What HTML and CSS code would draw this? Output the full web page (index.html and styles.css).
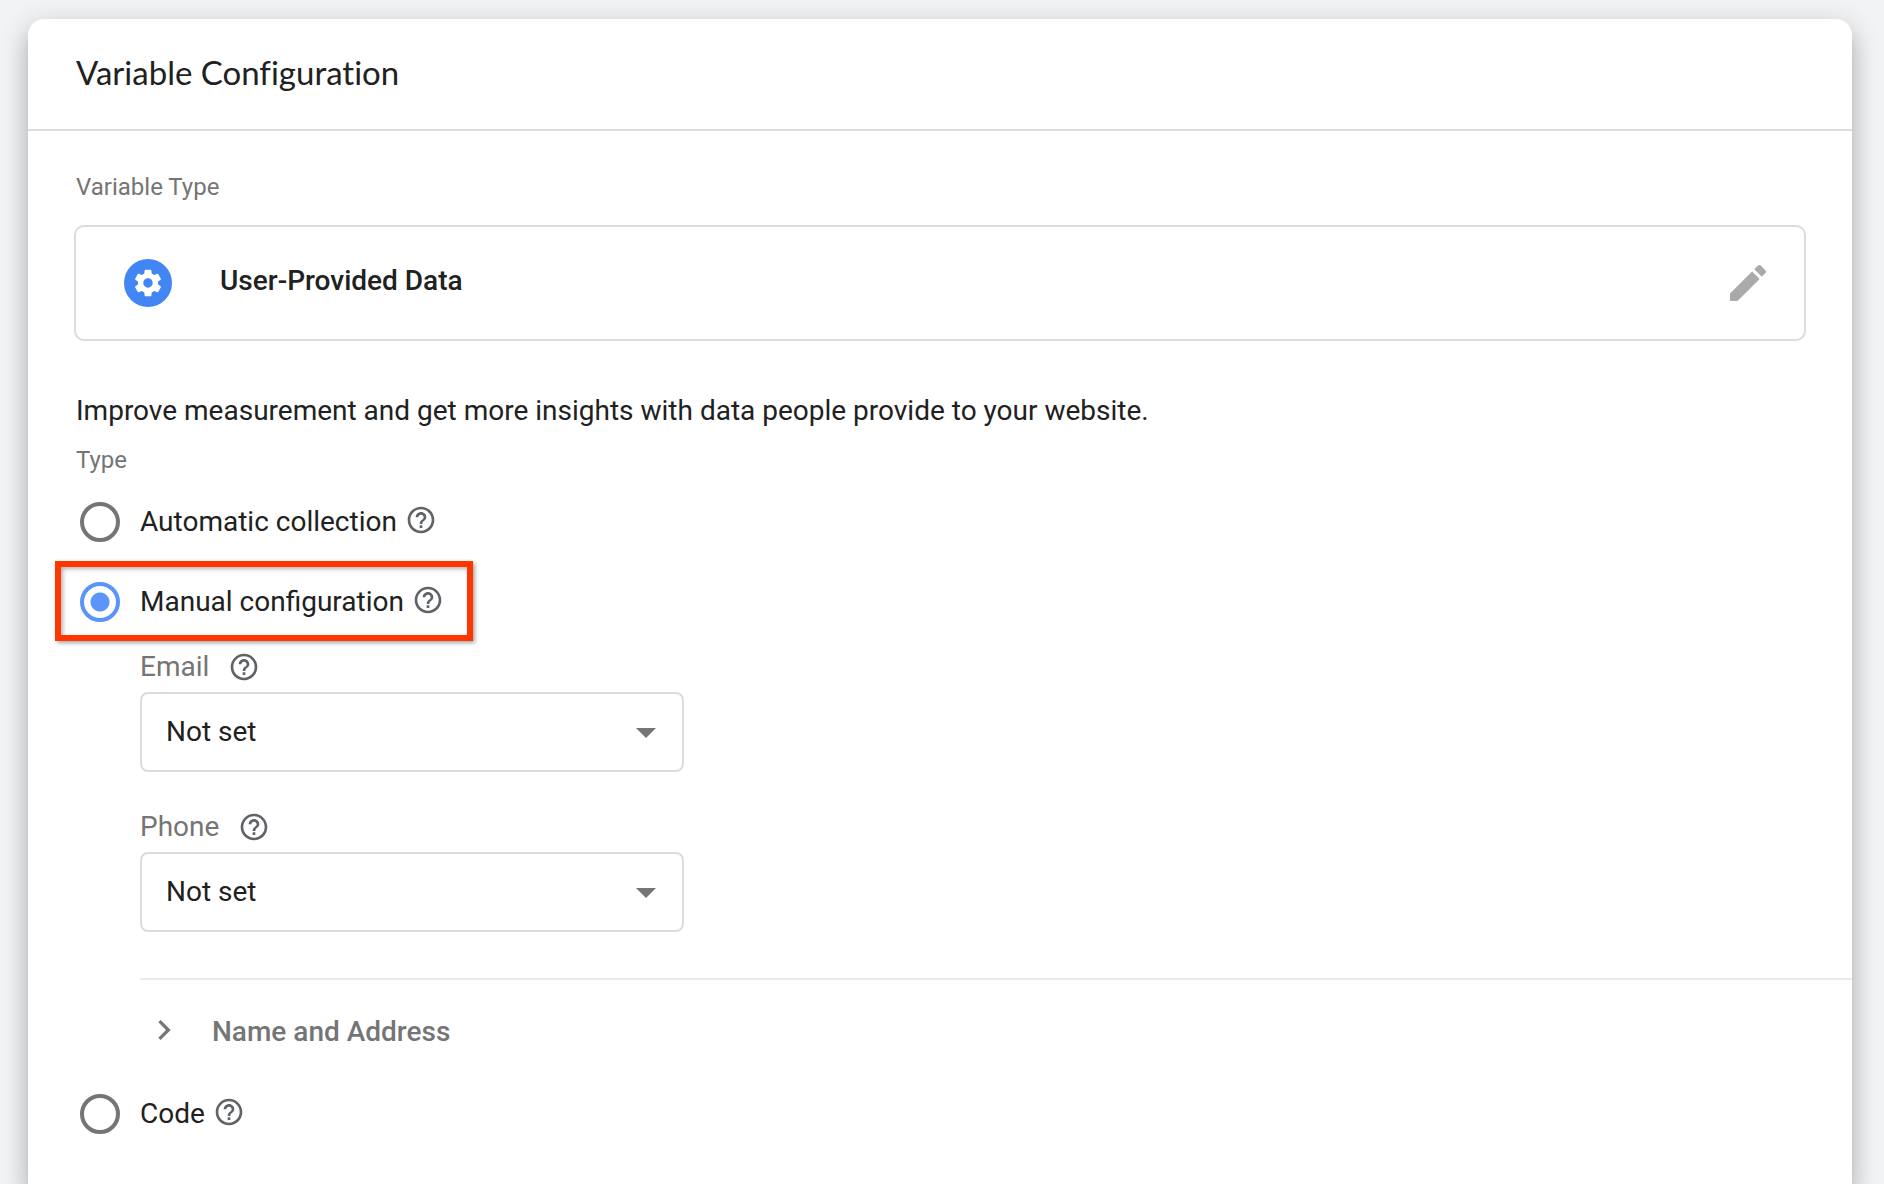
FILE: index.html
```
<!doctype html>
<html lang="en">
<head>
    <meta charset="utf-8">
    <meta name="viewport" content="width=device-width,initial-scale=1">
    <title>Variable Configuration</title>
    <link rel="stylesheet" href="styles.css">
</head>
<body>

<svg class="sprite" aria-hidden="true">
    <symbol id="icon-help" viewBox="0 0 24 24"><path d="M11 18h2v-2h-2v2zm1-16C6.48 2 2 6.48 2 12s4.480 10 10 10 10-4.480 10-10S17.520 2 12 2zm0 18c-4.410 0-8-3.590-8-8s3.590-8 8-8 8 3.590 8 8-3.590 8-8 8zm0-14c-2.210 0-4 1.790-4 4h2c0-1.100.9-2 2-2s2 .9 2 2c0 2-3 1.750-3 5h2c0-2.250 3-2.500 3-5 0-2.210-1.790-4-4-4z"/></symbol>
    <symbol id="icon-arrow" viewBox="0 0 20 10"><path d="M0 0h20L10 10z"/></symbol>
</svg>

<main class="card">
    <header class="card-header">
        <h1 class="card-title">Variable Configuration</h1>
    </header>

    <div class="card-body">
        <h2 class="caption">Variable Type</h2>
        <div class="type-box">
            <span class="type-icon">
                <svg viewBox="0 0 24 24"><path d="M19.430 12.980c.04-.32.070-.64.070-.98s-.03-.66-.07-.98l2.110-1.650c.19-.15.240-.42.120-.64l-2-3.460c-.12-.22-.39-.3-.61-.22l-2.490 1c-.52-.4-1.080-.73-1.690-.98l-.38-2.650C14.460 2.180 14.250 2 14 2h-4c-.25 0-.46.180-.49.420l-.38 2.650c-.61.250-1.170.590-1.690.980l-2.490-1c-.23-.09-.49 0-.61.220l-2 3.460c-.13.220-.07.490.120.640l2.110 1.650c-.04.320-.07.650-.07.980s.03.660.070.980l-2.110 1.650c-.19.150-.24.420-.12.640l2 3.460c.12.220.390.300.610.220l2.490-1c.52.400 1.080.730 1.690.980l.38 2.650c.03.240.240.420.490.420h4c.25 0 .46-.18.490-.42l.38-2.650c.61-.25 1.170-.59 1.690-.98l2.490 1c.23.090.490 0 .61-.22l2-3.460c.12-.22.070-.49-.12-.64l-2.110-1.650zM12 15.500c-1.930 0-3.500-1.570-3.500-3.500s1.570-3.500 3.500-3.500 3.500 1.570 3.500 3.500-1.570 3.500-3.500 3.500z"/></svg>
            </span>
            <span class="type-name">User-Provided Data</span>
            <button type="button" class="edit-button" aria-label="Edit variable type">
                <svg viewBox="0 0 24 24"><path d="M3 17.250V21h3.750L17.810 9.940l-3.750-3.750L3 17.250zM20.710 7.040c.39-.39.390-1.020 0-1.410l-2.340-2.340c-.39-.39-1.020-.39-1.410 0l-1.830 1.830 3.750 3.750 1.830-1.830z"/></svg>
            </button>
        </div>

        <p class="description">Improve measurement and get more insights with data people provide to your website.</p>
        <h2 class="caption">Type</h2>

        <div class="options">
            <div class="option">
                <input type="radio" class="radio" name="type" id="type-auto">
                <label for="type-auto">Automatic collection</label>
                <svg class="help"><use href="#icon-help"/></svg>
            </div>
            <div class="option highlight">
                <input type="radio" class="radio" name="type" id="type-manual" checked>
                <label for="type-manual">Manual configuration</label>
                <svg class="help"><use href="#icon-help"/></svg>
            </div>

            <div class="manual">
                <div class="field">
                    <div class="field-label">
                        <label for="email">Email</label>
                        <svg class="help"><use href="#icon-help"/></svg>
                    </div>
                    <div class="select-wrap">
                        <select class="select" id="email"><option>Not set</option></select>
                        <svg class="select-arrow"><use href="#icon-arrow"/></svg>
                    </div>
                </div>
                <div class="field">
                    <div class="field-label">
                        <label for="phone">Phone</label>
                        <svg class="help"><use href="#icon-help"/></svg>
                    </div>
                    <div class="select-wrap">
                        <select class="select" id="phone"><option>Not set</option></select>
                        <svg class="select-arrow"><use href="#icon-arrow"/></svg>
                    </div>
                </div>
                <button type="button" class="expander" aria-expanded="false">
                    <svg class="chevron" viewBox="0 0 24 24"><path d="M10 6L8.590 7.410 13.170 12l-4.580 4.590L10 18l6-6z"/></svg>
                    <span>Name and Address</span>
                </button>
            </div>

            <div class="option">
                <input type="radio" class="radio" name="type" id="type-code">
                <label for="type-code">Code</label>
                <svg class="help"><use href="#icon-help"/></svg>
            </div>
        </div>
    </div>
</main>

</body>
</html>
```
FILE: styles.css
```
*{box-sizing:border-box}
body{margin:0;padding:19px 32px 0 28px;background:#f1f3f4;color:#212121;font:28px/32px Roboto,"Liberation Sans",sans-serif}
h1,h2,p{margin:0;font-weight:400}
svg{display:block;fill:currentColor;flex:none}
button{margin:0;padding:0;border:0;background:none;font:inherit;color:inherit;cursor:pointer}
.sprite{position:absolute;width:0;height:0}

.card{min-height:calc(100vh - 19px);background:#fff;border-radius:16px 16px 0 0;box-shadow:0 16px 20px 2px rgba(0,0,0,.14),0 6px 28px 4px rgba(0,0,0,.12),0 10px 10px -6px rgba(0,0,0,.2)}
.card-header{height:112px;padding:33px 48px 0;border-bottom:2px solid #dadce0}
.card-title{font-family:"Google Sans",Lato,sans-serif;font-size:33px;line-height:40px;font-variant-ligatures:none}
.card-body{padding:40px 46px 24px}
.caption{padding-left:2px;font-size:24px;color:#757575}

/* variable type */
.type-box{display:flex;align-items:center;height:116px;margin:22px 0 54px;padding:0 32px 0 48px;border:2px solid #dadce0;border-radius:10px}
.type-icon{display:flex;align-items:center;justify-content:center;width:48px;height:48px;border-radius:50%;background:#4285f4;color:#fff}
.type-icon svg{width:32px;height:32px}
.type-name{flex:1;margin-left:48px;padding-bottom:4px;font-weight:500}
.edit-button{color:#aaa}
.edit-button svg{width:48px;height:48px}

.description{padding-left:2px;margin-bottom:17px}

/* radio options */
.options{padding:6px 0 0 6px}
.option{position:relative;display:flex;align-items:center;width:max-content;height:80px}
.radio{appearance:none;flex:none;width:40px;height:40px;margin:0 20px 0 0;border:4px solid #757575;border-radius:50%}
.radio:checked{border-color:#5b95f9;background:radial-gradient(circle,#5b95f9 0 9px,transparent 10px)}
.help{width:32px;height:32px;color:#5f6368}
.option .help{margin:0 0 4px 8px}
.highlight::after{content:"";position:absolute;top:-1px;right:-29px;bottom:1px;left:-25px;border:6px solid #ff3600;box-shadow:2px 2px 4px rgba(0,0,0,.35),inset 2px 2px 4px rgba(0,0,0,.3);pointer-events:none}

/* manual configuration */
.manual{margin:0 -46px 0 60px}
.field{width:544px;max-width:100%;margin-bottom:30px}
.field-label{display:flex;align-items:center;height:50px;color:#757575}
.field-label .help{margin-left:19px}
.select-wrap{position:relative}
.select{appearance:none;display:block;width:100%;height:80px;padding:0 64px 0 24px;border:2px solid #dadce0;border-radius:8px;background:#fff;color:inherit;font:inherit}
.select-arrow{position:absolute;top:36px;right:28px;width:20px;height:10px;color:#757575;pointer-events:none}
.expander{display:flex;align-items:center;width:100%;height:96px;margin-top:46px;padding:10px 0 0 4px;border-top:2px solid #e8eaed;color:#757575;font-weight:500}
.chevron{width:40px;height:40px;margin:0 28px 4px 0}
```
